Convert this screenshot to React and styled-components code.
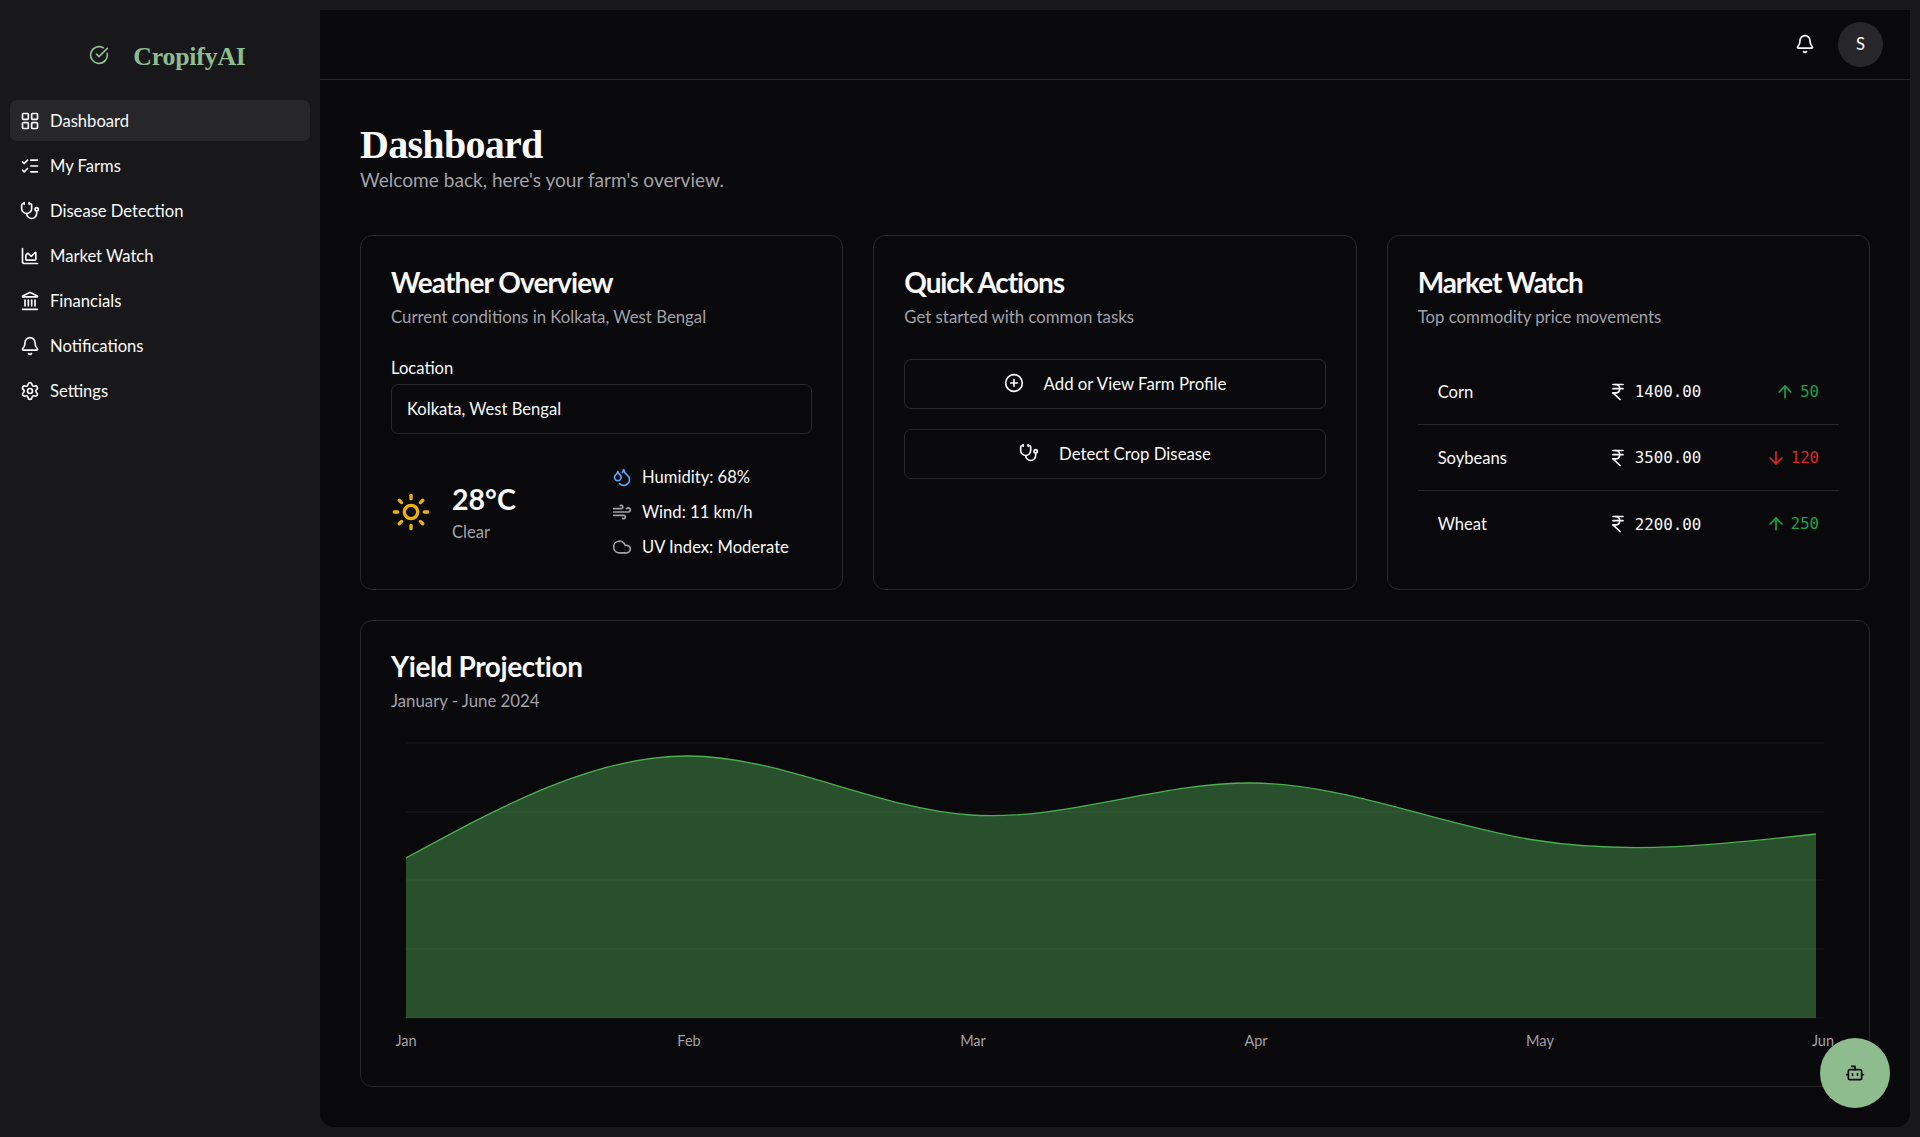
import React from "react";
import styled, { createGlobalStyle } from "styled-components";
import {
  LayoutGrid, ListChecks, Stethoscope, ChartArea, Landmark, Bell, Settings,
  CircleCheckBig, Droplets, Wind, Cloud, Sun, ArrowUp, ArrowDown, IndianRupee,
  CirclePlus, Bot,
} from "lucide-react";

const GlobalStyle = createGlobalStyle`
  html, body {
    margin: 0;
    height: 100%;
    background: #18181b;
    color: #fafafa;
    font-family: "Lato", "Liberation Sans", sans-serif;
    overflow: hidden;
  }
  * { box-sizing: border-box; }
`;

const Shell = styled.div`
  display: grid;
  grid-template-columns: 320px 1fr;
  height: 1137px;
  padding: 10px 10px 10px 0;
`;

const Sidebar = styled.aside`
  margin-top: -10px;
  padding: 0 10px;
`;

const Brand = styled.div`
  display: flex;
  align-items: center;
  justify-content: center;
  gap: 24px;
  height: 100px;
  padding-left: 15px;
  padding-top: 13px;
  color: #8fbc8f;
  font-family: "Liberation Serif", serif;
  font-size: 25.8px;
  font-weight: 700;
  letter-spacing: -0.2px;
  svg { margin-bottom: 4px; }
`;

const Nav = styled.nav`
  display: flex;
  flex-direction: column;
  gap: 4px;
`;

const NavItem = styled.a`
  display: flex;
  align-items: center;
  gap: 10px;
  height: 41px;
  padding: 0 10px;
  border-radius: 7px;
  background: ${(p) => (p.$active ? "#27272a" : "transparent")};
  font-size: 16.6px;
  color: #fafafa;
`;

const Main = styled.main`
  display: flex;
  flex-direction: column;
  background: #09090b;
  border-radius: 0 0 14px 14px;
  min-width: 0;
`;

const Header = styled.header`
  display: flex;
  align-items: center;
  justify-content: flex-end;
  gap: 23px;
  height: 70px;
  padding: 0 27px 1px 0;
  border-bottom: 1px solid #27272a;
`;

const Avatar = styled.div`
  display: flex;
  align-items: center;
  justify-content: center;
  width: 45px;
  height: 45px;
  border-radius: 50%;
  background: #27272a;
  font-size: 16.6px;
`;

const Content = styled.div`
  padding: 42px 40px 0 40px;
`;

const PageTitle = styled.h1`
  margin: 0;
  height: 45px;
  font-family: "Liberation Serif", serif;
  font-size: 40px;
  line-height: 45px;
  font-weight: 700;
  letter-spacing: -0.7px;
`;

const PageSub = styled.p`
  margin: 0;
  height: 29px;
  font-size: 19.1px;
  line-height: 26px;
  color: #a1a1aa;
`;

const TopGrid = styled.div`
  display: grid;
  grid-template-columns: repeat(3, 1fr);
  gap: 30px;
  margin-top: 39px;
`;

const Card = styled.section`
  border: 1px solid #27272a;
  border-radius: 12px;
  padding: 30px;
`;

const CardTitle = styled.h2`
  margin: 0;
  font-size: 28px;
  line-height: 32px;
  font-weight: 700;
  letter-spacing: ${(p) => p.$spacing || "-0.9px"};
`;

const CardDesc = styled.p`
  margin: 8px 0 0;
  font-size: 16.8px;
  line-height: 22px;
  color: #a1a1aa;
`;

const FieldLabel = styled.label`
  display: block;
  margin-top: 30px;
  font-size: 16.6px;
  line-height: 20px;
`;

const Input = styled.div`
  display: flex;
  align-items: center;
  height: 50px;
  margin-top: 6px;
  padding: 0 15px;
  border: 1px solid #27272a;
  border-radius: 7px;
  font-size: 16.6px;
`;

const WeatherRow = styled.div`
  display: grid;
  grid-template-columns: 221px 1fr;
  align-items: center;
  margin-top: 31px;
`;

const WeatherNow = styled.div`
  display: flex;
  align-items: center;
  gap: 21px;
  color: #eab308;
`;

const Temp = styled.div`
  margin-top: 2px;
  color: #fafafa;
  font-size: 28.5px;
  line-height: 34px;
  font-weight: 700;
`;

const Condition = styled.div`
  color: #a1a1aa;
  font-size: 16.6px;
  line-height: 24px;
  margin-top: 4px;
`;

const Stats = styled.ul`
  display: flex;
  flex-direction: column;
  gap: 11px;
  margin: 0;
  padding: 0;
  list-style: none;
`;

const Stat = styled.li`
  display: flex;
  align-items: center;
  gap: 10px;
  height: 24px;
  font-size: 16.6px;
  svg { color: ${(p) => p.$tint || "#a1a1aa"}; }
`;

const Actions = styled.div`
  display: flex;
  flex-direction: column;
  gap: 20px;
  margin-top: 31px;
`;

const ActionButton = styled.button`
  display: flex;
  align-items: center;
  justify-content: center;
  gap: 20px;
  height: 50px;
  padding: 0 0 2px;
  border: 1px solid #27272a;
  border-radius: 7px;
  background: transparent;
  color: #fafafa;
  font: inherit;
  font-size: 16.8px;
`;

const MarketList = styled.div`
  margin-top: 31px;
`;

const MarketRow = styled.div`
  display: grid;
  grid-template-columns: 167px 1fr auto;
  align-items: center;
  height: 66px;
  padding: 0 20px;
  border-bottom: ${(p) => (p.$last ? "none" : "1px solid #27272a")};
  font-size: 16.6px;
`;

const Price = styled.div`
  display: flex;
  align-items: center;
  gap: 7px;
  font-family: "DejaVu Sans Mono", monospace;
  font-size: 15.8px;
  margin-left: 3px;
`;

const Change = styled.div`
  display: flex;
  align-items: center;
  gap: 5px;
  font-family: "DejaVu Sans Mono", monospace;
  font-size: 15.6px;
  color: ${(p) => (p.$up ? "#16a34a" : "#dc2626")};
`;

const ChartCard = styled(Card)`
  margin-top: 30px;
  height: 467px;
  padding-top: 29px;
`;

const ChartSvg = styled.svg`
  display: block;
  margin-top: 21px;
  overflow: visible;
`;

const Fab = styled.button`
  position: absolute;
  left: 1820px;
  top: 1038px;
  display: flex;
  align-items: center;
  justify-content: center;
  width: 70px;
  height: 70px;
  border: none;
  border-radius: 50%;
  background: #8fbc8f;
  color: #09090b;
`;

const navItems = [
  ["Dashboard", LayoutGrid],
  ["My Farms", ListChecks],
  ["Disease Detection", Stethoscope],
  ["Market Watch", ChartArea],
  ["Financials", Landmark],
  ["Notifications", Bell],
  ["Settings", Settings],
];

const markets = [
  { name: "Corn", price: "1400.00", change: 50, up: true },
  { name: "Soybeans", price: "3500.00", change: 120, up: false },
  { name: "Wheat", price: "2200.00", change: 250, up: true },
];

// chart coordinates: svg origin sits at page (391, 733)
const xs = [15, 297, 579, 861, 1143, 1425];
const ys = [125, 23, 82, 50, 107, 101];
const grid = [10, 79, 147, 216, 285];
const labels = [["Jan", 15], ["Feb", 298], ["Mar", 582], ["Apr", 865], ["May", 1149], ["Jun", 1432]];

// natural cubic spline, same recipe as d3 curveNatural
function controlPoints(v) {
  const n = v.length - 1;
  const a = new Array(n), b = new Array(n), r = new Array(n);
  a[0] = 0; b[0] = 2; r[0] = v[0] + 2 * v[1];
  for (let i = 1; i < n - 1; i++) {
    a[i] = 1; b[i] = 4; r[i] = 4 * v[i] + 2 * v[i + 1];
  }
  a[n - 1] = 2; b[n - 1] = 7; r[n - 1] = 8 * v[n - 1] + v[n];
  for (let i = 1; i < n; i++) {
    const m = a[i] / b[i - 1];
    b[i] -= m;
    r[i] -= m * r[i - 1];
  }
  a[n - 1] = r[n - 1] / b[n - 1];
  for (let i = n - 2; i >= 0; i--) a[i] = (r[i] - a[i + 1]) / b[i];
  b[n - 1] = (v[n] + a[n - 1]) / 2;
  for (let i = 0; i < n - 1; i++) b[i] = 2 * v[i + 1] - a[i + 1];
  return [a, b];
}

function curvePath() {
  const [ax, bx] = controlPoints(xs);
  const [ay, by] = controlPoints(ys);
  let d = `M${xs[0]},${ys[0]}`;
  for (let i = 0; i < xs.length - 1; i++) {
    d += `C${ax[i]},${ay[i]},${bx[i]},${by[i]},${xs[i + 1]},${ys[i + 1]}`;
  }
  return d;
}

function YieldChart() {
  const line = curvePath();
  return (
    <ChartSvg width="1447" height="323" viewBox="0 0 1447 323">
      {grid.map((y) => (
        <line key={y} x1="15" x2="1433" y1={y} y2={y} stroke="#27272a" strokeOpacity="0.6" />
      ))}
      <path d={`${line}L1425,285L15,285Z`} fill="#52a954" fillOpacity="0.45" />
      <path d={line} fill="none" stroke="#4caf50" strokeWidth="1.3" />
      {labels.map(([t, x]) => (
        <text key={t} x={x} y="313" textAnchor="middle" fontSize="14.5" fill="#a1a1aa" fontFamily="Lato, sans-serif">
          {t}
        </text>
      ))}
    </ChartSvg>
  );
}

export default function App() {
  return (
    <>
      <GlobalStyle />
      <Shell>
        <Sidebar>
          <Brand>
            <CircleCheckBig size={20} />
            <span>CropifyAI</span>
          </Brand>
          <Nav>
            {navItems.map(([label, Icon], i) => (
              <NavItem key={label} $active={i === 0}>
                <Icon size={20} />
                {label}
              </NavItem>
            ))}
          </Nav>
        </Sidebar>
        <Main>
          <Header>
            <Bell size={20} />
            <Avatar>S</Avatar>
          </Header>
          <Content>
            <PageTitle>Dashboard</PageTitle>
            <PageSub>Welcome back, here's your farm's overview.</PageSub>
            <TopGrid>
              <Card>
                <CardTitle>Weather Overview</CardTitle>
                <CardDesc>Current conditions in Kolkata, West Bengal</CardDesc>
                <FieldLabel>Location</FieldLabel>
                <Input>Kolkata, West Bengal</Input>
                <WeatherRow>
                  <WeatherNow>
                    <Sun size={40} />
                    <div>
                      <Temp>28°C</Temp>
                      <Condition>Clear</Condition>
                    </div>
                  </WeatherNow>
                  <Stats>
                    <Stat $tint="#60a5fa"><Droplets size={20} />Humidity: 68%</Stat>
                    <Stat><Wind size={20} />Wind: 11 km/h</Stat>
                    <Stat><Cloud size={20} />UV Index: Moderate</Stat>
                  </Stats>
                </WeatherRow>
              </Card>
              <Card>
                <CardTitle $spacing="-1.1px">Quick Actions</CardTitle>
                <CardDesc>Get started with common tasks</CardDesc>
                <Actions>
                  <ActionButton><CirclePlus size={20} />Add or View Farm Profile</ActionButton>
                  <ActionButton><Stethoscope size={20} />Detect Crop Disease</ActionButton>
                </Actions>
              </Card>
              <Card>
                <CardTitle $spacing="-1.1px">Market Watch</CardTitle>
                <CardDesc>Top commodity price movements</CardDesc>
                <MarketList>
                  {markets.map((m, i) => (
                    <MarketRow key={m.name} $last={i === markets.length - 1}>
                      <span>{m.name}</span>
                      <Price><IndianRupee size={20} />{m.price}</Price>
                      <Change $up={m.up}>
                        {m.up ? <ArrowUp size={20} /> : <ArrowDown size={20} />}
                        {m.change}
                      </Change>
                    </MarketRow>
                  ))}
                </MarketList>
              </Card>
            </TopGrid>
            <ChartCard>
              <CardTitle $spacing="-0.4px">Yield Projection</CardTitle>
              <CardDesc>January - June 2024</CardDesc>
              <YieldChart />
            </ChartCard>
          </Content>
          <Fab><Bot size={20} /></Fab>
        </Main>
      </Shell>
    </>
  );
}
